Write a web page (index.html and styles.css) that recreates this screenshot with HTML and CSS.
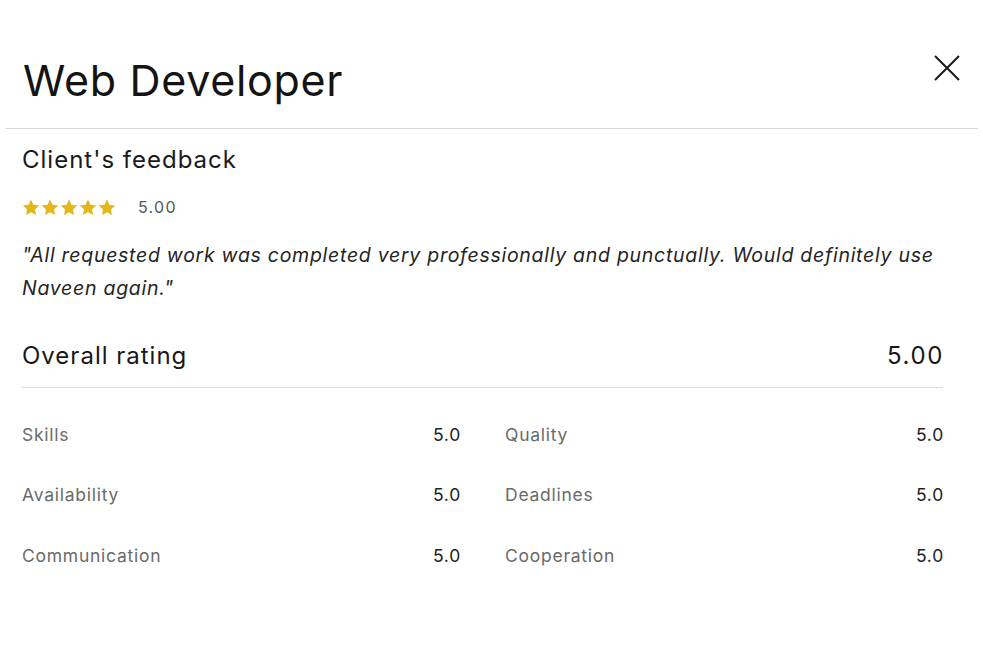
FILE: index.html
```html
<!DOCTYPE html>
<html>
<head>
<meta charset="utf-8">
<link rel="stylesheet" href="styles.css">
</head>
<body>
<div class="modal">
  <header class="modal-header">
    <h1 class="title">Web Developer</h1>
    <button class="close" aria-label="Close">
      <svg width="28" height="28" viewBox="0 0 28 28"><path d="M2 2L26 26M26 2L2 26" stroke="#1a1a1a" stroke-width="2" fill="none"/></svg>
    </button>
  </header>
  <section class="content">
    <h2 class="subtitle">Client's feedback</h2>
    <div class="stars-row">
      <div class="stars">
        <svg width="18" height="17" viewBox="0 0 24 23"><path d="M12 0.8l3.3 7.1 7.8 0.9-5.8 5.3 1.6 7.7L12 17.9l-6.9 3.9 1.6-7.7L0.9 8.8l7.8-0.9z" fill="#e2b719"/></svg>
        <svg width="18" height="17" viewBox="0 0 24 23"><path d="M12 0.8l3.3 7.1 7.8 0.9-5.8 5.3 1.6 7.7L12 17.9l-6.9 3.9 1.6-7.7L0.9 8.8l7.8-0.9z" fill="#e2b719"/></svg>
        <svg width="18" height="17" viewBox="0 0 24 23"><path d="M12 0.8l3.3 7.1 7.8 0.9-5.8 5.3 1.6 7.7L12 17.9l-6.9 3.9 1.6-7.7L0.9 8.8l7.8-0.9z" fill="#e2b719"/></svg>
        <svg width="18" height="17" viewBox="0 0 24 23"><path d="M12 0.8l3.3 7.1 7.8 0.9-5.8 5.3 1.6 7.7L12 17.9l-6.9 3.9 1.6-7.7L0.9 8.8l7.8-0.9z" fill="#e2b719"/></svg>
        <svg width="18" height="17" viewBox="0 0 24 23"><path d="M12 0.8l3.3 7.1 7.8 0.9-5.8 5.3 1.6 7.7L12 17.9l-6.9 3.9 1.6-7.7L0.9 8.8l7.8-0.9z" fill="#e2b719"/></svg>
      </div>
      <span class="score-small">5.00</span>
    </div>
    <p class="quote">"All requested work was completed very professionally and punctually. Would definitely use Naveen again."</p>
    <div class="overall">
      <span>Overall rating</span>
      <span>5.00</span>
    </div>
    <div class="grid">
      <div class="item"><span class="label">Skills</span><span class="value">5.0</span></div>
      <div class="item"><span class="label">Quality</span><span class="value">5.0</span></div>
      <div class="item"><span class="label">Availability</span><span class="value">5.0</span></div>
      <div class="item"><span class="label">Deadlines</span><span class="value">5.0</span></div>
      <div class="item"><span class="label">Communication</span><span class="value">5.0</span></div>
      <div class="item"><span class="label">Cooperation</span><span class="value">5.0</span></div>
    </div>
  </section>
</div>
</body>
</html>
```

FILE: styles.css
```css
* { box-sizing: border-box; }
html, body {
  margin: 0;
  background: #fff;
  font-family: Inter, "Liberation Sans", Arial, sans-serif;
  color: #181818;
}
.modal {
  margin: 0 5px;
  width: 973px;
}
.modal-header {
  display: flex;
  justify-content: space-between;
  align-items: flex-start;
  padding: 52px 17px 0 18px;
  height: 129px;
  border-bottom: 1px solid #d9d9d9;
}
.title {
  margin: 0;
  font-size: 43px;
  font-weight: 400;
  line-height: 56px;
  letter-spacing: 0.7px;
  color: #141414;
}
.close {
  background: none;
  border: 0;
  padding: 0;
  margin-top: 2px;
  width: 28px;
  height: 28px;
  cursor: pointer;
}
.close svg { display: block; }
.content {
  padding: 15px 35px 0 17px;
}
.subtitle {
  margin: 0;
  font-size: 24px;
  font-weight: 400;
  line-height: 32px;
  letter-spacing: 1px;
  color: #1a1a1a;
}
.stars-row {
  display: flex;
  align-items: center;
  gap: 22px;
  margin-top: 21px;
  height: 20px;
}
.stars {
  display: flex;
  gap: 1px;
}
.stars svg { display: block; }
.score-small {
  font-size: 16px;
  letter-spacing: 1.3px;
  color: #555;
}
.quote {
  margin: 22px 0 0;
  font-style: italic;
  font-size: 19.5px;
  line-height: 33px;
  letter-spacing: 0.72px;
  color: #242424;
}
.overall {
  display: flex;
  justify-content: space-between;
  align-items: center;
  margin-top: 23px;
  height: 60px;
  padding-bottom: 4px;
  font-size: 24px;
  letter-spacing: 1px;
  color: #181818;
  border-bottom: 1px solid #d9d9d9;
}
.overall span:last-child { letter-spacing: 1.6px; margin-right: -1px; }
.grid {
  display: grid;
  grid-template-columns: 1fr 1fr;
  column-gap: 45px;
  padding-top: 16px;
}
.item {
  display: flex;
  justify-content: space-between;
  align-items: center;
  height: 60.5px;
  font-size: 17.5px;
  letter-spacing: 0.75px;
}
.label { color: #6a6a6a; }
.value { color: #222; margin-right: -1px; }
```
